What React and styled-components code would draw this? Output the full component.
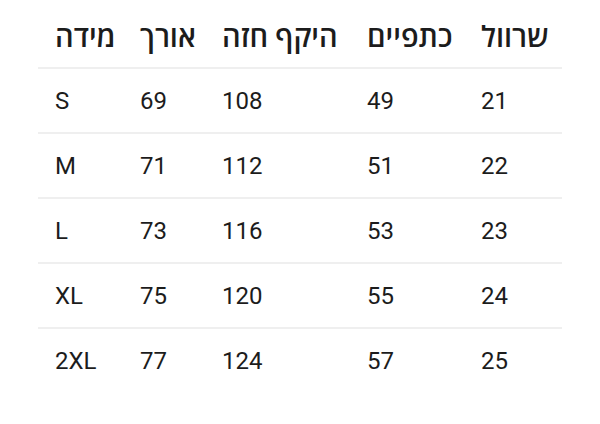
import React from 'react';
import styled, { createGlobalStyle } from 'styled-components';

const GlobalStyle = createGlobalStyle`
  html, body {
    margin: 0;
    padding: 0;
    background: #ffffff;
  }
  body {
    font-family: Roboto, "Open Sans", sans-serif;
    color: #222222;
  }
`;

const Page = styled.div`
  width: 600px;
  height: 424px;
  background: #fff;
  padding: 0 38px;
  box-sizing: border-box;
`;

const Row = styled.div`
  display: grid;
  grid-template-columns: 85px 82px 145px 114px 98px;
  align-items: center;
  height: ${p => (p.$head ? '59px' : '63px')};
  padding-top: ${p => (p.$head ? '8px' : '0')};
  border-bottom: ${p => (p.$last ? 'none' : '2px solid #efefef')};
`;

const Cell = styled.div`
  padding-left: 17px;
  font-size: ${p => (p.$head ? '29px' : '24px')};
  font-weight: ${p => (p.$head ? 600 : 400)};
  color: #1c1c1c;
  white-space: nowrap;
  line-height: 1;
`;

const headers = ['מידה', 'אורך', 'היקף חזה', 'כתפיים', 'שרוול'];

const rows = [
  ['S', 69, 108, 49, 21],
  ['M', 71, 112, 51, 22],
  ['L', 73, 116, 53, 23],
  ['XL', 75, 120, 55, 24],
  ['2XL', 77, 124, 57, 25],
];

export default function App() {
  return (
    <>
      <GlobalStyle />
      <Page>
        <Row $head>
          {headers.map(h => (
            <Cell $head key={h}>{h}</Cell>
          ))}
        </Row>
        {rows.map((r, i) => (
          <Row key={r[0]} $last={i === rows.length - 1}>
            {r.map((v, j) => (
              <Cell key={j}>{v}</Cell>
            ))}
          </Row>
        ))}
      </Page>
    </>
  );
}
